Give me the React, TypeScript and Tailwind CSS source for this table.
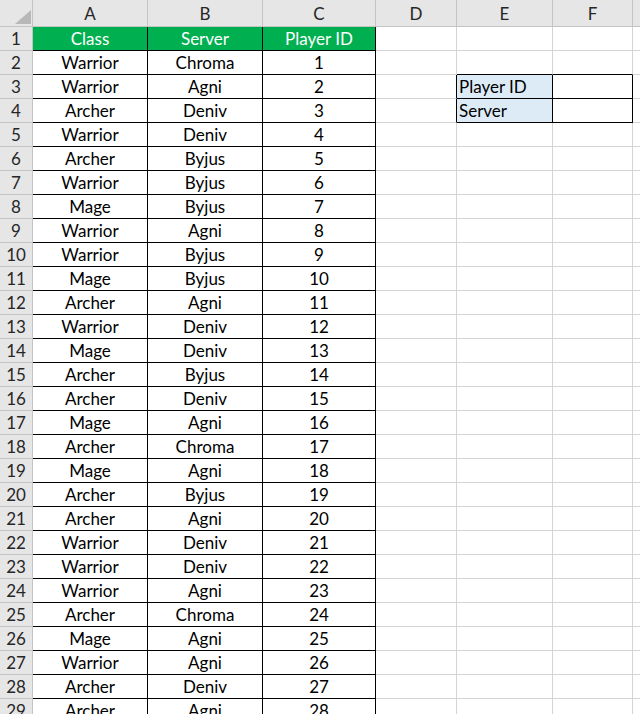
const rows: [string, string, number][] = [
  ["Warrior", "Chroma", 1],
  ["Warrior", "Agni", 2],
  ["Archer", "Deniv", 3],
  ["Warrior", "Deniv", 4],
  ["Archer", "Byjus", 5],
  ["Warrior", "Byjus", 6],
  ["Mage", "Byjus", 7],
  ["Warrior", "Agni", 8],
  ["Warrior", "Byjus", 9],
  ["Mage", "Byjus", 10],
  ["Archer", "Agni", 11],
  ["Warrior", "Deniv", 12],
  ["Mage", "Deniv", 13],
  ["Archer", "Byjus", 14],
  ["Archer", "Deniv", 15],
  ["Mage", "Agni", 16],
  ["Archer", "Chroma", 17],
  ["Mage", "Agni", 18],
  ["Archer", "Byjus", 19],
  ["Archer", "Agni", 20],
  ["Warrior", "Deniv", 21],
  ["Warrior", "Deniv", 22],
  ["Warrior", "Agni", 23],
  ["Archer", "Chroma", 24],
  ["Mage", "Agni", 25],
  ["Warrior", "Agni", 26],
  ["Archer", "Deniv", 27],
  ["Archer", "Agni", 28],
];

const cols = ["A", "B", "C", "D", "E", "F", ""];

function Head({ children, last }: { children?: React.ReactNode; last?: boolean }) {
  return (
    <div
      className={
        "flex items-center justify-center border-b border-[#c4c4c4] bg-[#e6e6e6] pt-px text-[#262626] " +
        (last ? "" : "border-r")
      }
    >
      {children}
    </div>
  );
}

function RowHead({ n }: { n: number }) {
  return (
    <div className="flex items-center justify-center border-r border-b border-[#c4c4c4] bg-[#e6e6e6] pt-px text-[#262626]">
      {n}
    </div>
  );
}

// table cell: black borders on right and bottom
function T({ children, head }: { children: React.ReactNode; head?: boolean }) {
  return (
    <div
      className={
        "flex items-center justify-center border-r border-b border-black pt-px " +
        (head ? "bg-[#00b050] text-white" : "text-black")
      }
    >
      {children}
    </div>
  );
}

function Blank({ r = "", b = "", fill = "", children }: { r?: string; b?: string; fill?: string; children?: React.ReactNode }) {
  return (
    <div
      className={
        "flex items-center border-r border-b pl-[2px] pt-px text-black " +
        (r || "border-r-[#d4d4d4] ") +
        (b || "border-b-[#d4d4d4] ") +
        fill
      }
    >
      {children}
    </div>
  );
}

export default function App() {
  const all: [string, string, number | string][] = [["Class", "Server", "Player ID"], ...rows];
  return (
    <div
      className="grid h-[714px] w-[640px] grid-cols-[33px_115px_115px_113px_81px_96px_80px_1fr] grid-rows-[27px] auto-rows-[24px] overflow-hidden bg-white text-[17px]"
      style={{ fontFamily: "Lato, 'Open Sans', sans-serif" }}
    >
      <div className="relative border-r border-b border-[#c4c4c4] bg-[#e6e6e6]">
        <svg className="absolute left-[15px] top-[10px]" width="16" height="14" viewBox="0 0 16 14">
          <polygon points="16,0 16,14 0,14" fill="#b8b8b8" />
        </svg>
      </div>
      {cols.map((c, i) => (
        <Head key={i} last={i === cols.length - 1}>
          {c}
        </Head>
      ))}
      {all.map((row, i) => {
        const n = i + 1;
        const box = n === 3 || n === 4;
        return [
          <RowHead key={"h" + n} n={n} />,
          <T key={"a" + n} head={n === 1}>{row[0]}</T>,
          <T key={"b" + n} head={n === 1}>{row[1]}</T>,
          <T key={"c" + n} head={n === 1}>{row[2]}</T>,
          <Blank key={"d" + n} r={box ? "border-r-black " : ""} />,
          <Blank
            key={"e" + n}
            r={box ? "border-r-black " : ""}
            b={box || n === 2 ? "border-b-black " : ""}
            fill={box ? "bg-[#ddebf7]" : ""}
          >
            {n === 3 ? "Player ID" : n === 4 ? "Server" : null}
          </Blank>,
          <Blank key={"f" + n} r={box ? "border-r-black " : ""} b={box || n === 2 ? "border-b-black " : ""} />,
          <div key={"g" + n} className="border-b border-[#d4d4d4]" />,
        ];
      })}
    </div>
  );
}
